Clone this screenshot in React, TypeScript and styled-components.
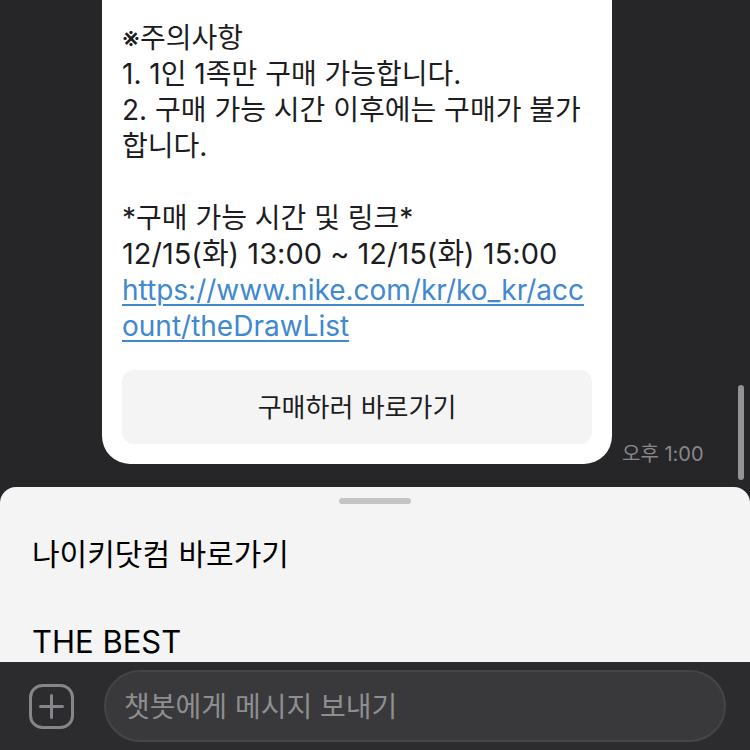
import React from 'react';
import styled, { createGlobalStyle } from 'styled-components';

const GlobalStyle = createGlobalStyle`
  * { box-sizing: border-box; }
  html, body { margin: 0; height: 100%; background: #262628; }
  body, button, input { font-family: Inter, "Noto Sans CJK KR", sans-serif; }
  #root { height: 100%; }
`;

const Screen = styled.main`
  height: 100vh;
  display: flex;
  flex-direction: column;
  overflow: hidden;
  background: #262628;
`;

const Chat = styled.section`
  display: flex;
  align-items: flex-end;
  gap: 10px;
  padding: 0 6px 7px 102px;
`;

const Bubble = styled.article`
  flex: 0 1 510px;
  min-width: 0;
  margin-bottom: 16px;
  padding: 20px;
  border-radius: 0 0 28px 28px;
  background: #fff;
`;

const Message = styled.p`
  margin: 0;
  color: #1d1d1f;
  font-size: 28px;
  line-height: 36px;
  white-space: pre-wrap;
`;

const Period = styled.span`
  font-size: 29px;
`;

const MessageLink = styled.a`
  color: #4088d0;
  text-decoration-thickness: 2px;
  text-underline-offset: 4px;
  word-break: break-all;
`;

const BuyButton = styled.button`
  display: block;
  width: 100%;
  height: 74px;
  margin-top: 26px;
  padding: 0 0 4px;
  border: 0;
  border-radius: 12px;
  background: #f4f4f4;
  color: #1d1d1f;
  font-size: 26px;
`;

const Time = styled.time`
  flex: 1;
  margin-bottom: 16px;
  color: #88888a;
  font-size: 20px;
  line-height: 20px;
  white-space: nowrap;
`;

const ScrollThumb = styled.div`
  width: 6px;
  height: 95px;
  border-radius: 3px;
  background: #939395;
`;

const Sheet = styled.nav`
  flex: 1;
  min-height: 0;
  padding: 11px 32px 0;
  overflow: hidden;
  border-radius: 16px 16px 0 0;
  background: #f4f4f4;
`;

const Handle = styled.div`
  width: 72px;
  height: 6px;
  margin: 0 auto 4px;
  border-radius: 3px;
  background: #c4c4c4;
`;

const SheetButton = styled.button<{ $latin?: boolean }>`
  display: block;
  width: 100%;
  height: 88px;
  padding: ${({ $latin }) => ($latin ? '2px 0 0' : '0')};
  border: 0;
  background: transparent;
  color: #000;
  font-size: ${({ $latin }) => ($latin ? 31 : 30)}px;
  text-align: left;
`;

const Composer = styled.form`
  flex: none;
  display: flex;
  align-items: center;
  gap: 30px;
  height: 88px;
  padding: 0 24px 0 29px;
  background: #2c2c2e;
`;

const AddButton = styled.button`
  width: 45px;
  height: 45px;
  padding: 0;
  border: 0;
  background: transparent;
`;

const Input = styled.input`
  flex: 1;
  min-width: 0;
  height: 72px;
  padding: 2px 18px 0;
  border: 2px solid #454547;
  border-radius: 36px;
  background: #39393b;
  color: #fff;
  font-size: 28px;
  &::placeholder { color: #8e8e90; opacity: 1; }
`;

const notice = [
  '※주의사항',
  '1. 1인 1족만 구매 가능합니다.',
  '2. 구매 가능 시간 이후에는 구매가 불가합니다.',
  '',
  '*구매 가능 시간 및 링크*',
  '',
].join('\n');

export default function App() {
  return (
    <Screen>
      <GlobalStyle />
      <Chat>
        <Bubble>
          <Message>
            {notice}
            <Period>12/15(화) 13:00 ~ 12/15(화) 15:00</Period>
            {'\n'}
            <MessageLink href="https://www.nike.com/kr/ko_kr/account/theDrawList">
              https://www.nike.com/kr/ko_kr/account/theDrawList
            </MessageLink>
          </Message>
          <BuyButton type="button">구매하러 바로가기</BuyButton>
        </Bubble>
        <Time>오후 1:00</Time>
        <ScrollThumb />
      </Chat>
      <Sheet>
        <Handle />
        <SheetButton type="button">나이키닷컴 바로가기</SheetButton>
        <SheetButton type="button" $latin>THE BEST</SheetButton>
      </Sheet>
      <Composer onSubmit={(e) => e.preventDefault()}>
        <AddButton type="button" aria-label="추가">
          <svg width="45" height="45" viewBox="0 0 45 45" fill="none" stroke="#85858c" strokeWidth="3">
            <rect x="1.5" y="1.5" width="42" height="42" rx="12" />
            <path d="M22.5 11.5v22M11.5 22.5h22" strokeLinecap="round" />
          </svg>
        </AddButton>
        <Input aria-label="메시지" placeholder="챗봇에게 메시지 보내기" />
      </Composer>
    </Screen>
  );
}
